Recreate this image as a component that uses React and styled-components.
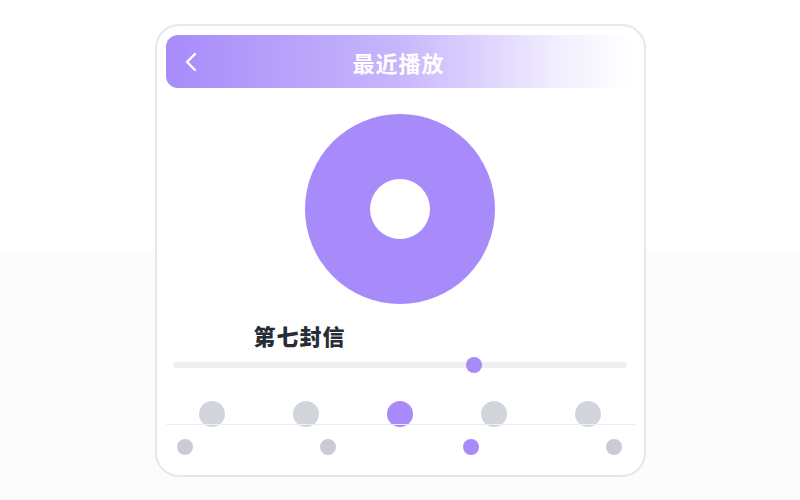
import React from 'react';
import styled, { createGlobalStyle } from 'styled-components';

const GlobalStyle = createGlobalStyle`
  html, body {
    margin: 0;
    padding: 0;
  }
  body {
    min-height: 500px;
    background: linear-gradient(#ffffff 0, #ffffff 251px, #fcfcfd 251px, #fcfcfd 100%);
    font-family: "Noto Sans CJK SC", "Noto Sans", sans-serif;
  }
`;

const Page = styled.div`
  display: flex;
  justify-content: center;
  padding-top: 24px;
`;

const Card = styled.div`
  width: 491px;
  height: 453px;
  box-sizing: border-box;
  border: 2px solid #e6e7eb;
  border-radius: 24px;
  background: #fff;
  padding: 9px;
  display: flex;
  flex-direction: column;
`;

const Header = styled.div`
  height: 53px;
  margin-right: 3px;
  border-radius: 12px;
  background: linear-gradient(90deg, #a78bfa 0%, #c7b6fc 50%, #f3efff 85%, #ffffff 100%);
  display: flex;
  align-items: center;
  flex-shrink: 0;
`;

const BackButton = styled.button`
  border: 0;
  background: none;
  padding: 0;
  margin-left: 15px;
  width: 20px;
  height: 24px;
  display: flex;
  align-items: center;
  justify-content: center;
  cursor: pointer;
`;

const HeaderTitle = styled.h1`
  margin: 0 35px 0 0;
  flex: 1;
  text-align: center;
  color: #fff;
  font-size: 22px;
  font-weight: 700;
  letter-spacing: 1px;
`;

const Disc = styled.div`
  width: 190px;
  height: 190px;
  border-radius: 50%;
  background: #a78bfa;
  margin: 26px auto 0;
  display: flex;
  align-items: center;
  justify-content: center;
  flex-shrink: 0;
`;

const DiscHole = styled.div`
  width: 60px;
  height: 60px;
  border-radius: 50%;
  background: #fff;
`;

const SongTitle = styled.h2`
  margin: 16px 0 0 88px;
  font-size: 22px;
  line-height: 30px;
  font-weight: 800;
  color: #272d36;
  letter-spacing: 1px;
`;

const Track = styled.div`
  position: relative;
  margin: 12px 8px 0 7px;
  height: 6px;
  border-radius: 3px;
  background: #edeff2;
`;

const Thumb = styled.div`
  position: absolute;
  top: 50%;
  width: 16px;
  height: 16px;
  border-radius: 50%;
  background: #a78bfa;
  transform: translate(-50%, -50%);
`;

const DotRow = styled.div`
  display: flex;
  justify-content: space-around;
  height: 23px;
  margin-top: 33px;
`;

const Dot = styled.div`
  width: ${p => p.size}px;
  height: ${p => p.size}px;
  border-radius: 50%;
  background: ${p => (p.active ? '#a78bfa' : p.color)};
  flex-shrink: 0;
`;

const TabBar = styled.div`
  position: relative;
  border-top: 1px solid #eceef1;
  display: flex;
  justify-content: space-between;
  padding: 14px 12px 0 11px;
`;

const big = [false, false, true, false, false];
const small = [false, false, true, false];

export default function App() {
  const progress = 66.3;
  return (
    <>
      <GlobalStyle />
      <Page>
        <Card>
          <Header>
            <BackButton aria-label="back">
              <svg width="14" height="20" viewBox="0 0 14 20" fill="none">
                <path d="M11 2L3 10l8 8" stroke="#fff" strokeWidth="2.4" strokeLinecap="round" strokeLinejoin="round" />
              </svg>
            </BackButton>
            <HeaderTitle>最近播放</HeaderTitle>
          </Header>
          <Disc>
            <DiscHole />
          </Disc>
          <SongTitle>第七封信</SongTitle>
          <Track>
            <Thumb style={{ left: `${progress}%` }} />
          </Track>
          <DotRow>
            {big.map((a, i) => (
              <Dot key={i} size={26} active={a} color="#d2d6dc" />
            ))}
          </DotRow>
          <TabBar>
            {small.map((a, i) => (
              <Dot key={i} size={16} active={a} color="#c9cdd3" />
            ))}
          </TabBar>
        </Card>
      </Page>
    </>
  );
}
